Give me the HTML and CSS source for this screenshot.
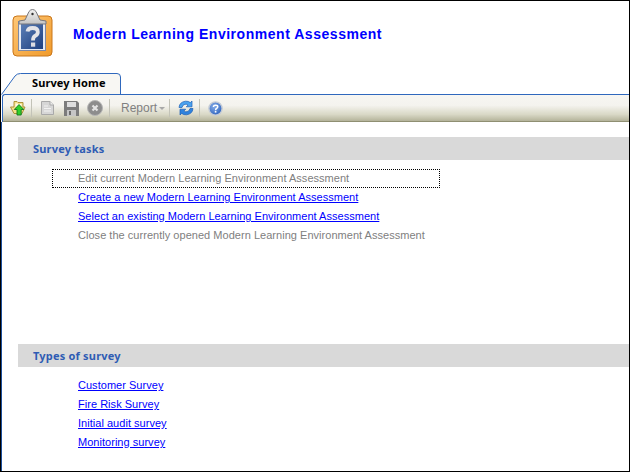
FILE: index.html
```html
<!DOCTYPE html>
<html lang="en">
<head>
<meta charset="utf-8">
<title>Modern Learning Environment Assessment</title>
<link rel="stylesheet" href="styles.css">
</head>
<body>
<div class="window">
  <header class="banner">
    <svg class="logo" width="42" height="50" viewBox="0 0 42 50">
      <defs>
        <linearGradient id="og" x1="0" y1="0" x2="1" y2="1"><stop offset="0" stop-color="#ffc878"/><stop offset="1" stop-color="#f09a2a"/></linearGradient>
        <linearGradient id="bl" x1="0" y1="0" x2="1" y2="1"><stop offset="0" stop-color="#5c7fb6"/><stop offset="1" stop-color="#1d3f80"/></linearGradient>
        <linearGradient id="cl" x1="0" y1="0" x2="0" y2="1"><stop offset="0" stop-color="#f2f2f2"/><stop offset="1" stop-color="#c4c4c4"/></linearGradient>
      </defs>
      <rect x="1" y="8" width="39" height="40" rx="4" fill="url(#og)" stroke="#c9761a"/>
      <rect x="6.500" y="13.500" width="27" height="29" fill="#e6ebf4" stroke="#7f89a3"/>
      <rect x="9" y="16" width="22" height="25" fill="url(#bl)"/>
      <path d="M7 16 V13 L13 12 L17 3.500 Q18.500 1.500 20.500 1.500 Q22.500 1.500 24 3.500 L28 12 L34 13 V16 Z" fill="url(#cl)" stroke="#77777c"/>
      <circle cx="20.500" cy="6" r="1.200" fill="#333"/>
      <path d="M15.500 23.500 Q16 20 20.500 20 Q25.800 20 25.800 24 Q25.800 26.500 23.300 27.800 Q21 29 21 32.500" fill="none" stroke="#e4e4e8" stroke-width="3.800"/>
      <rect x="19" y="34.500" width="4.200" height="4.200" fill="#dcdce2"/>
    </svg>
    <h1 class="title">Modern Learning Environment Assessment</h1>
  </header>

  <nav class="tabs">
    <div class="tab">
      <svg class="tab-shape" width="120" height="22" viewBox="0 0 120 22">
        <path d="M0.500 21.500 L14 3 Q16 0.500 19.500 0.500 H116 Q119.500 0.500 119.500 4 V21" fill="#f8f7f3" stroke="#2f68bd"/>
      </svg>
      <span class="tab-label">Survey Home</span>
    </div>
  </nav>

  <div class="toolbar">
    <svg class="tool" width="16" height="16" viewBox="0 0 16 16">
      <path d="M0.500 7 L4 13.500 H12 L15 7 H13 V2.500 H8 L7 1.500 H4 V7 Z" fill="#f6e08c" stroke="#a58a2e" stroke-width=".9"/>
      <path d="M5.500 3.500 H7 L8 4 H11.500 V7 H5.500 Z" fill="#fffbe6"/>
      <path d="M9 4.500 L13.800 9.500 H11.200 V15 H7 V9.500 H4.300 Z" fill="#2fd02c" stroke="#12761a" stroke-width=".9"/>
    </svg>
    <span class="sep"></span>
    <svg class="tool" width="15" height="16" viewBox="0 0 15 16">
      <path d="M1.500 1.500 H10 L13.500 5 V14.500 H1.500 Z" fill="#d6d6d6" stroke="#a9a9a9"/>
      <path d="M10 1.500 V5 H13.500" fill="#f0f0f0" stroke="#a9a9a9"/>
      <path d="M4 6 H8 M4 8.500 H11 M4 11 H11" stroke="#f2f2f2"/>
    </svg>
    <svg class="tool save" width="15" height="15" viewBox="0 0 15 15">
      <path d="M0 0 H13 L15 2 V15 H0 Z" fill="#7c7c7c"/>
      <rect x="3" y="1" width="9" height="5" fill="#dedede"/>
      <rect x="3" y="9" width="9" height="6" fill="#c6c6c6"/>
      <rect x="5" y="10" width="2" height="4" fill="#6d6d6d"/>
    </svg>
    <svg class="tool stop" width="16" height="16" viewBox="0 0 16 16">
      <circle cx="8" cy="8" r="7.500" fill="#8d8d8d" stroke="#b5b5b5"/>
      <path d="M5.500 5.500 L10.500 10.500 M10.500 5.500 L5.500 10.500" stroke="#e4e4e4" stroke-width="2.200"/>
    </svg>
    <span class="sep"></span>
    <span class="report">Report<span class="caret"></span></span>
    <span class="sep"></span>
    <svg class="tool" width="16" height="16" viewBox="0 0 16 16">
      <path d="M1 7.500 Q1.500 2 7.500 1.200 Q10.500 1 12.300 2.600 L14 1 V6.800 H8.300 L10 5.100 Q8.700 3.900 7 4.300 Q4.600 4.700 4 7.500 Z" fill="#4aa3f0" stroke="#1c5fb5" stroke-width=".7"/>
      <path d="M15 8.500 Q14.500 14 8.500 14.800 Q5.500 15 3.700 13.400 L2 15 V9.200 H7.700 L6 10.900 Q7.300 12.100 9 11.700 Q11.400 11.300 12 8.500 Z" fill="#2f83de" stroke="#1c5fb5" stroke-width=".7"/>
    </svg>
    <span class="sep"></span>
    <svg class="tool" width="15" height="15" viewBox="0 0 15 15">
      <defs><radialGradient id="hb" cx=".4" cy=".35" r=".7"><stop offset="0" stop-color="#85ace8"/><stop offset="1" stop-color="#2d62bd"/></radialGradient></defs>
      <circle cx="7.500" cy="7.500" r="6.600" fill="url(#hb)" stroke="#c4cbd6" stroke-width="1.400"/>
      <path d="M5.300 6 Q5.500 4.200 7.600 4.200 Q9.800 4.200 9.800 5.800 Q9.800 6.900 8.500 7.500 Q7.600 7.900 7.600 9.200" fill="none" stroke="#fff" stroke-width="1.400"/>
      <rect x="6.800" y="10" width="1.600" height="1.600" fill="#fff"/>
    </svg>
  </div>

  <main class="content">
    <section class="section tasks">
      <h2 class="section-head">Survey tasks</h2>
      <ul class="list">
        <li class="item focus"><span class="off">Edit current Modern Learning Environment Assessment</span></li>
        <li class="item"><a href="#">Create a new Modern Learning Environment Assessment</a></li>
        <li class="item"><a href="#">Select an existing Modern Learning Environment Assessment</a></li>
        <li class="item"><span class="off">Close the currently opened Modern Learning Environment Assessment</span></li>
      </ul>
    </section>
    <section class="section types">
      <h2 class="section-head">Types of survey</h2>
      <ul class="list">
        <li class="item"><a href="#">Customer Survey</a></li>
        <li class="item"><a href="#">Fire Risk Survey</a></li>
        <li class="item"><a href="#">Initial audit survey</a></li>
        <li class="item"><a href="#">Monitoring survey</a></li>
      </ul>
    </section>
  </main>
</div>
</body>
</html>
```

FILE: styles.css
```css
* { box-sizing: border-box; }
html, body { margin: 0; padding: 0; }
body { width: 630px; height: 472px; overflow: hidden; background: #fff; }

.window {
  width: 630px;
  height: 472px;
  border: 1px solid #000;
  display: flex;
  flex-direction: column;
  background: #fff;
  overflow: hidden;
}

.banner {
  height: 72px;
  flex: none;
  display: flex;
  align-items: flex-start;
  padding: 7px 0 0 11px;
}
.logo { flex: none; }
.title {
  margin: 18px 0 0 19px;
  font: bold 14px/16px "Liberation Sans", Arial, sans-serif;
  letter-spacing: .53px;
  color: #0000ff;
  white-space: nowrap;
}

.tabs { height: 21px; flex: none; }
.tab { width: 120px; height: 21px; display: flex; justify-content: flex-start; }
.tab-shape { flex: none; }
.tab-label {
  margin: 3px 0 0 -89px;
  font: bold 11px/14px "Noto Sans", Tahoma, sans-serif;
  letter-spacing: .1px;
  color: #000;
  white-space: nowrap;
}

.toolbar {
  height: 28px;
  flex: none;
  margin-left: 1px;
  display: flex;
  align-items: center;
  gap: 8px;
  padding: 0 0 0 7px;
  border-top: 1px solid #2f68bd;
  border-left: 1px solid #2f68bd;
  border-bottom: 1px solid #8f8f72;
  border-top-left-radius: 3px;
  background: linear-gradient(#f7f6f2 0, #f4f3ee 40%, #d9d8c6 75%, #b4b39a 100%);
}
.tool { flex: none; }
.save { margin-left: 1px; }
.stop { margin-right: 1px; }
.sep { width: 1px; height: 18px; background: #c3c3b8; flex: none; margin-left: -3px; }
.report {
  font: 12px/14px "Liberation Sans", Arial, sans-serif;
  color: #808080;
  display: flex;
  align-items: center;
  margin: 0 -1px 0 3px;
}
.caret {
  width: 0; height: 0;
  margin-left: 2px;
  border: 3px solid transparent;
  border-top: 3px solid #a8a8a8;
  border-bottom: 0;
}

.content {
  flex: 1;
  border-left: 1px solid #1c4f9c;
  padding: 15px 0 0 16px;
  display: flex;
  flex-direction: column;
}
.section-head {
  margin: 0;
  height: 23px;
  padding-left: 15px;
  background: #d9d9d9;
  font: bold 11px/23px "Noto Sans", Tahoma, sans-serif;
  letter-spacing: .2px;
  color: #2f5cb4;
}
.tasks { height: 207px; flex: none; }
.list { list-style: none; margin: 9px 0 0; padding: 0 0 0 34px; }
.item {
  height: 19px;
  width: 388px;
  padding-left: 26px;
  font: 11px/19px "Liberation Sans", Arial, sans-serif;
  letter-spacing: .03px;
  white-space: nowrap;
}
.item a { color: #0000ff; text-decoration: underline; }
.off { color: #808080; }
.focus { outline: 1px dotted #000; outline-offset: -1px; }
```
